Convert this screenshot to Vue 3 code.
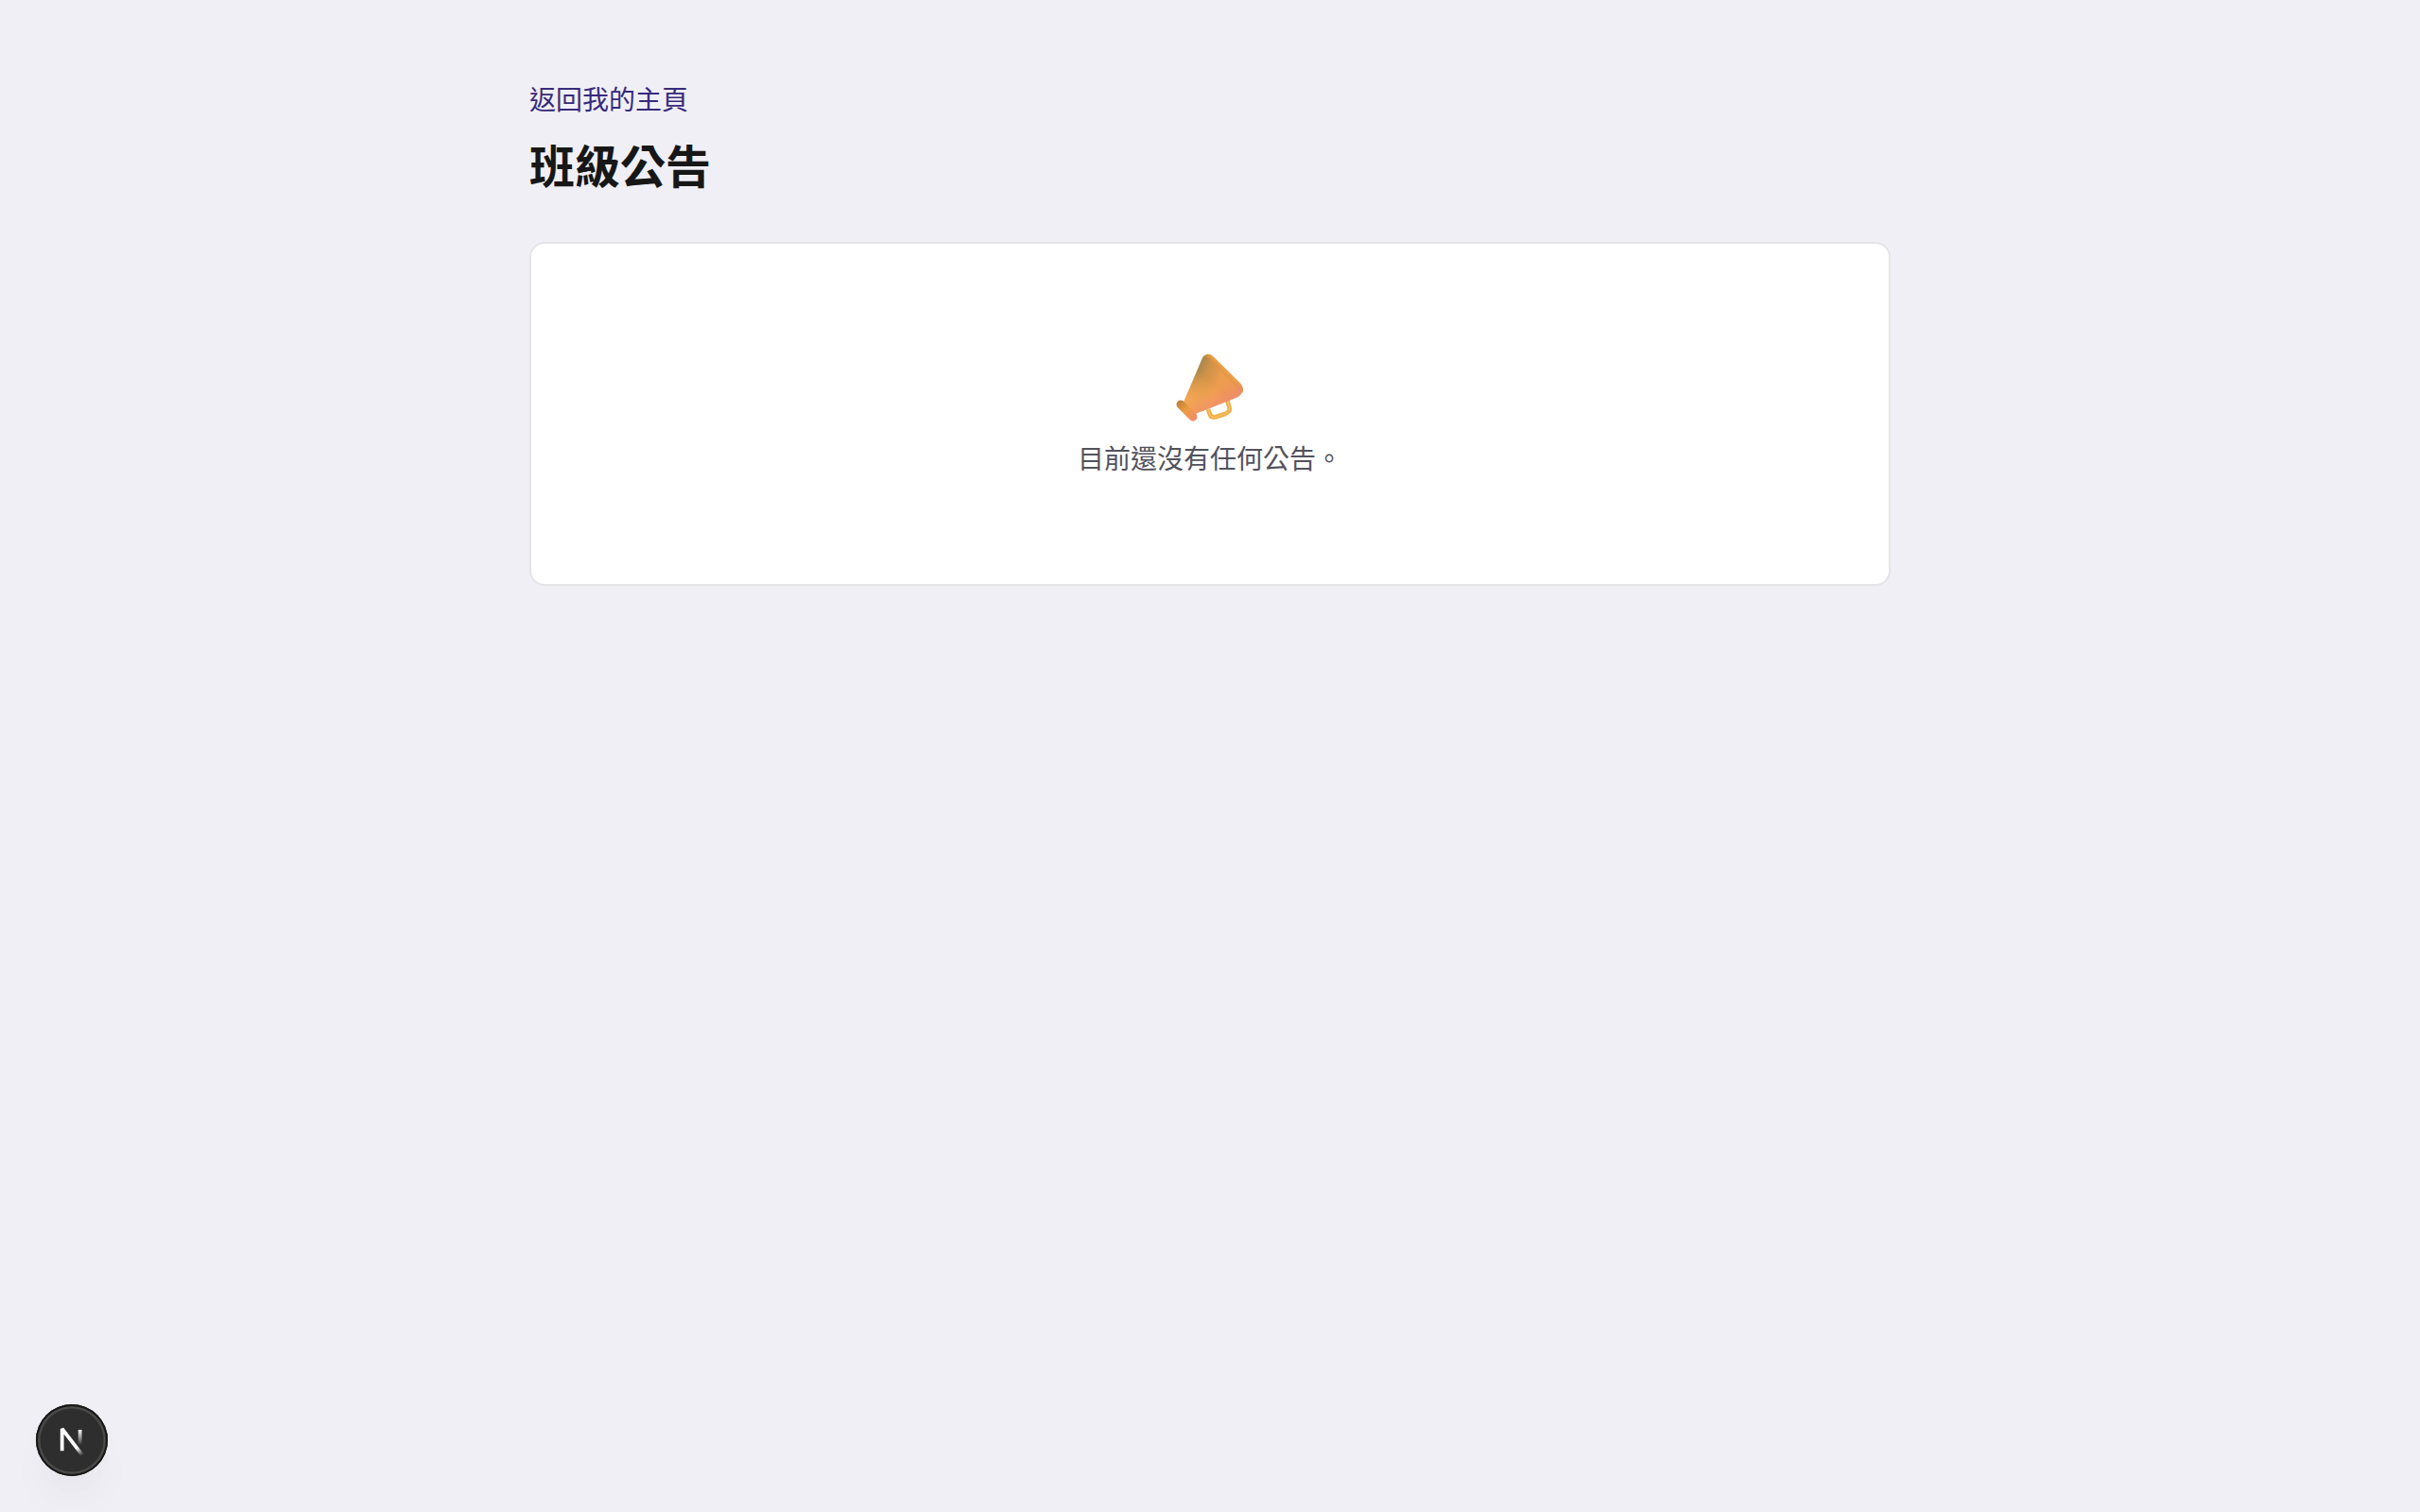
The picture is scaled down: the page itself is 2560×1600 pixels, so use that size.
<template>
  <div class="page">
    <main class="container">
      <a class="back-link" href="#" @click.prevent>返回我的主頁</a>
      <h1 class="title">班級公告</h1>
      <section class="card">
        <svg class="megaphone" viewBox="0 0 110 100" aria-hidden="true">
          <defs>
            <linearGradient id="cone" x1="34" y1="36" x2="62" y2="50" gradientUnits="userSpaceOnUse">
              <stop offset="0" stop-color="#9c8250" />
              <stop offset="0.45" stop-color="#cc9148" />
              <stop offset="1" stop-color="#ee9c4e" />
            </linearGradient>
            <linearGradient id="cone-pink" x1="60" y1="44" x2="72" y2="67" gradientUnits="userSpaceOnUse">
              <stop offset="0.2" stop-color="#f08a70" stop-opacity="0" />
              <stop offset="1" stop-color="#ee8678" stop-opacity="0.7" />
            </linearGradient>
            <linearGradient id="cone-glow" x1="30" y1="74" x2="56" y2="44" gradientUnits="userSpaceOnUse">
              <stop offset="0" stop-color="#f8a850" />
              <stop offset="0.4" stop-color="#f6a654" stop-opacity="0.85" />
              <stop offset="1" stop-color="#ffb14c" stop-opacity="0" />
            </linearGradient>
            <linearGradient id="cone-edge" x1="65" y1="34" x2="71" y2="28" gradientUnits="userSpaceOnUse">
              <stop offset="0" stop-color="#e0913f" stop-opacity="0" />
              <stop offset="0.5" stop-color="#e5983f" stop-opacity="0.8" />
              <stop offset="1" stop-color="#f6ae58" />
            </linearGradient>
            <linearGradient id="mouth" x1="22" y1="65" x2="39" y2="84" gradientUnits="userSpaceOnUse">
              <stop offset="0" stop-color="#bf823c" />
              <stop offset="0.45" stop-color="#eb9c42" />
              <stop offset="1" stop-color="#f28b68" />
            </linearGradient>
            <linearGradient id="handle" x1="53" y1="76" x2="78" y2="68" gradientUnits="userSpaceOnUse">
              <stop offset="0" stop-color="#f4aa40" />
              <stop offset="1" stop-color="#ebb04a" />
            </linearGradient>
          </defs>
          <path :d="handle" fill="none" stroke="url(#handle)" stroke-width="4.6" />
          <path :d="handle" fill="none" stroke="#f8c468" stroke-width="1.2" />
          <path :d="cone" fill="url(#cone)" />
          <path :d="cone" fill="url(#cone-glow)" />
          <path :d="cone" fill="url(#cone-edge)" />
          <path :d="cone" fill="url(#cone-pink)" />
          <path d="M24 68L37 81" fill="none" stroke="url(#mouth)" stroke-width="9" stroke-linecap="round" />
        </svg>
        <p class="empty-text">目前還沒有任何公告。</p>
      </section>
    </main>

    <button class="dev-badge" type="button" aria-label="Open dev tools">
      <svg viewBox="0 0 38 38" fill="none">
        <defs>
          <linearGradient id="diagonal" x1="9.95" y1="11.13" x2="15.16" y2="17.6" gradientUnits="userSpaceOnUse">
            <stop stop-color="#fff" />
            <stop offset="0.604" stop-color="#fff" stop-opacity="0" />
            <stop offset="1" stop-color="#fff" stop-opacity="0" />
          </linearGradient>
          <linearGradient id="stem" x1="11.82" y1="1.4" x2="11.79" y2="9.62" gradientUnits="userSpaceOnUse">
            <stop stop-color="#fff" />
            <stop offset="1" stop-color="#fff" stop-opacity="0" />
          </linearGradient>
        </defs>
        <g transform="translate(11.5 12)" stroke-width="1.9">
          <path d="M13.3 15.2L2.34 1V12.6" stroke="url(#diagonal)" stroke-miterlimit="1.2" />
          <path d="M11.825 1.5V13.1" stroke="url(#stem)" />
        </g>
      </svg>
    </button>
  </div>
</template>

<script setup>
const cone =
  "M47 18.5Q52 12 58 17L87 45.5Q93 53 87 58Q85 60 81 61.5L39 78L27 66Z";
const handle =
  "M53 73L54.5 77.5Q56 82.5 61 81.2L71 78Q77 75.5 75.5 71L73 63";
</script>

<style>
body {
  background-color: #f0eff5;
}
</style>

<style scoped>
.page {
  min-height: 1600px;
  box-sizing: border-box;
  padding: 80px 0;
  font-family: "Noto Sans CJK TC", sans-serif;
  color: #171717;
}

.container {
  width: 1440px;
  margin: 0 auto;
}

.back-link {
  display: block;
  width: fit-content;
  font-size: 28px;
  line-height: 48px;
  color: #372a7c;
  text-decoration: none;
}

.title {
  margin: 13px 0 51px;
  font-size: 48px;
  line-height: 64px;
  font-weight: 700;
}

.card {
  display: flex;
  flex-direction: column;
  align-items: center;
  box-sizing: border-box;
  height: 364px;
  padding: 102px 0 0;
  background-color: #fff;
  border: 2px solid #e4e4e7;
  border-radius: 16px;
}

.megaphone {
  width: 110px;
  height: 100px;
}

.empty-text {
  margin: 4px 0 0;
  font-size: 28px;
  line-height: 40px;
  color: #52525c;
}

.dev-badge {
  position: fixed;
  left: 38px;
  bottom: 38px;
  width: 76px;
  height: 76px;
  padding: 0;
  border: 0;
  border-radius: 50%;
  background-color: #2e2e2e;
  box-shadow:
    inset 0 0 0 2px #171717,
    inset 0 0 0 4.5px #4a4a4a,
    0 32px 48px -8px rgba(0, 0, 0, 0.04),
    0 16px 32px rgba(0, 0, 0, 0.02);
}

.dev-badge svg {
  display: block;
  width: 76px;
  height: 76px;
}
</style>
